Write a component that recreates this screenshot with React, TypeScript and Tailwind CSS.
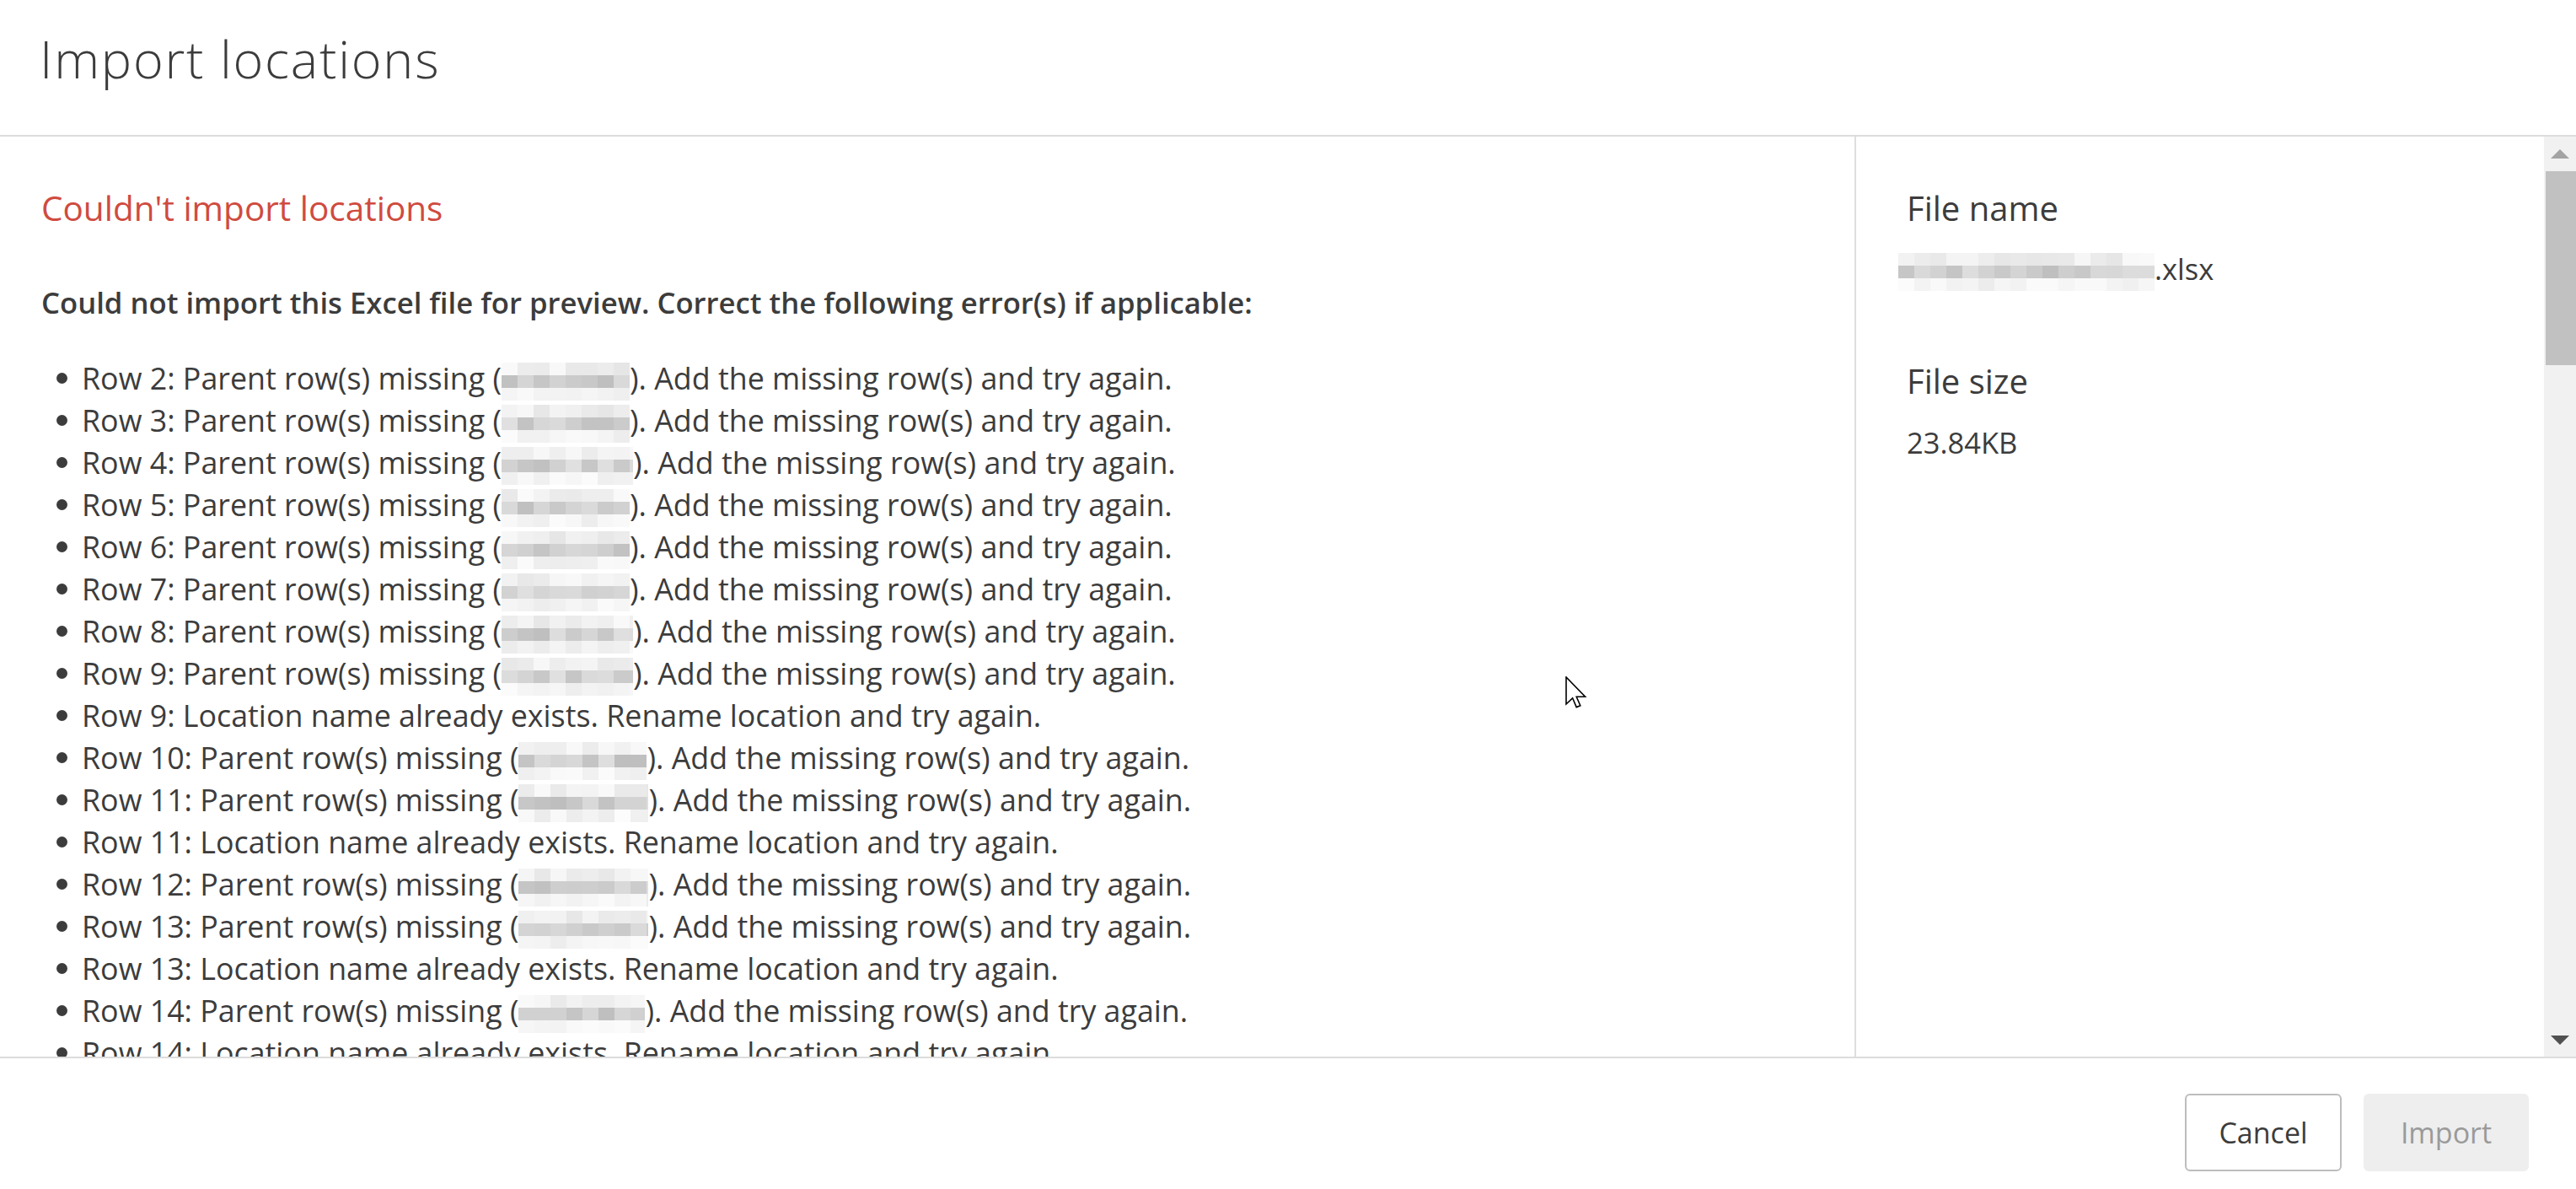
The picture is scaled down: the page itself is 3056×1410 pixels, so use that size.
import React from "react";

type Row = { n: number; kind: "parent" | "exists"; w?: number };

const rows: Row[] = [
    { n: 2, kind: "parent", w: 152 },
    { n: 3, kind: "parent", w: 152 },
    { n: 4, kind: "parent", w: 156 },
    { n: 5, kind: "parent", w: 152 },
    { n: 6, kind: "parent", w: 152 },
    { n: 7, kind: "parent", w: 152 },
    { n: 8, kind: "parent", w: 156 },
    { n: 9, kind: "parent", w: 156 },
    { n: 9, kind: "exists" },
    { n: 10, kind: "parent", w: 152 },
    { n: 11, kind: "parent", w: 154 },
    { n: 11, kind: "exists" },
    { n: 12, kind: "parent", w: 154 },
    { n: 13, kind: "parent", w: 154 },
    { n: 13, kind: "exists" },
    { n: 14, kind: "parent", w: 150 },
    { n: 14, kind: "exists" },
    { n: 15, kind: "parent", w: 152 },
    { n: 16, kind: "parent", w: 152 },
];

function seeded(seed: number) {
    let s = seed * 7919 + 13;
    return () => {
        s = (s * 9301 + 49297) % 233280;
        return s / 233280;
    };
}

// pixelated placeholder for redacted names
function Mosaic({ width, seed, cell = 19, h = 15 }: { width: number; seed: number; cell?: number; h?: number }) {
    const rnd = seeded(seed);
    const cols = Math.ceil(width / cell);
    const bands = [
        [230, 250],
        [190, 224],
        [236, 252],
    ];

    return (
        <span className="inline-flex flex-col align-middle overflow-hidden" style={{ width }}>
            {bands.map(([lo, hi], r) => (
                <span key={r} className="flex">
                    {Array.from({ length: cols }).map((_, c) => {
                        const v = Math.round(lo + rnd() * (hi - lo));
                        return (
                            <span
                                key={c}
                                className="shrink-0"
                                style={{ width: cell, height: h, backgroundColor: `rgb(${v},${v},${v})` }}
                            />
                        );
                    })}
                </span>
            ))}
        </span>
    );
}

function ErrorRow({ row, idx }: { row: Row; idx: number }) {
    return (
        <li className="flex h-[50px] leading-[50px] whitespace-nowrap">
            <span className="mt-[19px] ml-[18px] mr-[17px] w-[13px] h-[13px] rounded-full bg-[#3c3c3c] shrink-0" />
            {row.kind === "parent" ? (
                <span>
                    Row {row.n}: Parent row(s) missing (
                    <Mosaic width={row.w ?? 152} seed={idx + 3} />
                    ). Add the missing row(s) and try again.
                </span>
            ) : (
                <span>Row {row.n}: Location name already exists. Rename location and try again.</span>
            )}
        </li>
    );
}

export default function App() {
    return (
        <div
            className="relative w-[3056px] h-[1410px] bg-white text-[#3c3c3c] overflow-hidden flex flex-col"
            style={{ fontFamily: '"Open Sans", "Liberation Sans", sans-serif' }}
        >
            {/* header */}
            <div className="h-[162px] shrink-0 border-b-2 border-[#dcdcdc] pl-[47px] pt-[39px]">
                <h1 className="text-[61px] leading-[61px] font-light tracking-[1.8px]">Import locations</h1>
            </div>

            {/* body */}
            <div className="h-[1091px] shrink-0 flex overflow-hidden">
                <div className="flex-1 pl-[49px] pt-[61px] overflow-hidden">
                    <h2 className="text-[40.5px] leading-[48px] text-[#d04b3f]">Couldn't import locations</h2>

                    <p className="mt-[68px] text-[34.7px] leading-[40px] font-semibold whitespace-nowrap">
                        Could not import this Excel file for preview. Correct the following error(s) if applicable:
                    </p>

                    <ul className="mt-[44px] text-[35.8px]">
                        {rows.map((r, i) => (
                            <ErrorRow key={i} row={r} idx={i} />
                        ))}
                    </ul>
                </div>

                <div className="w-[2px] bg-[#dedede] shrink-0" />

                <div className="w-[816px] shrink-0 pl-[60px] pt-[61px]">
                    <div className="text-[40px] leading-[48px]">File name</div>
                    <div className="mt-[23px] text-[34.5px] leading-[50px] whitespace-nowrap -ml-[10px]">
                        <Mosaic width={304} seed={91} />
                        .xlsx
                    </div>

                    <div className="mt-[83px] text-[40px] leading-[48px]">File size</div>
                    <div className="mt-[24px] text-[34.5px] leading-[50px]">23.84KB</div>
                </div>

                {/* scrollbar */}
                <div className="w-[38px] shrink-0 bg-[#f1f1f1] flex flex-col items-center">
                    <div className="h-[41px] flex items-center justify-center">
                        <div className="w-0 h-0 border-l-[11px] border-r-[11px] border-b-[11px] border-l-transparent border-r-transparent border-b-[#a3a3a3]" />
                    </div>
                    <div className="w-full pl-[2px]">
                        <div className="h-[230px] bg-[#c1c1c1]" />
                    </div>
                    <div className="flex-1" />
                    <div className="h-[40px] flex items-center justify-center">
                        <div className="w-0 h-0 border-l-[11px] border-r-[11px] border-t-[11px] border-l-transparent border-r-transparent border-t-[#505050]" />
                    </div>
                </div>
            </div>

            {/* footer */}
            <div className="flex-1 border-t-2 border-[#dcdcdc] flex justify-end items-start pt-[42px] pr-[56px] gap-[26px]">
                <button className="w-[186px] h-[92px] rounded-[6px] border-2 border-[#bdbdbd] bg-white text-[34px] text-[#3c3c3c]">
                    Cancel
                </button>
                <button className="w-[196px] h-[92px] rounded-[6px] bg-[#eeeeee] text-[34px] text-[#9a9a9a]">
                    Import
                </button>
            </div>

            {/* mouse pointer */}
            <svg className="absolute left-[1857px] top-[802px]" width="27" height="40" viewBox="0 0 13.5 20">
                <path
                    d="M0.5 0.5 L0.5 16.5 L4.3 12.9 L6.6 18.3 L8.9 17.4 L6.6 12.1 L11.8 12.1 Z"
                    fill="white"
                    stroke="black"
                    strokeWidth="0.8"
                    strokeLinejoin="miter"
                />
            </svg>
        </div>
    );
}
